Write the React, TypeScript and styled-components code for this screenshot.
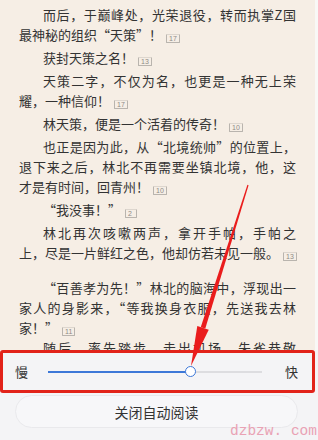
import React from "react";
import styled, { createGlobalStyle } from "styled-components";

const GlobalStyle = createGlobalStyle`
  html, body { margin: 0; padding: 0; }
  body { background: #f9f8f6; font-family: "Noto Sans CJK SC", "Noto Sans", sans-serif; }
`;

const Page = styled.div`
  position: relative;
  width: 318px;
  height: 440px;
  overflow: hidden;
  display: flex;
  flex-direction: column;
  background: #f9f8f6;
`;

const Reader = styled.div`
  height: 350px;
  box-sizing: border-box;
  margin-right: 3px;
  padding: 5px 19px 0 19px;
  background: #f6eee5;
  overflow: hidden;
  color: #333;
  font-size: 13px;
  line-height: 20px;
`;

const Para = styled.div<{ $gap?: number }>`
  margin-top: ${(p) => (p.$gap ?? 3)}px;
  &:first-child { margin-top: 0; }
`;

const Line = styled.div<{ $indent?: boolean; $full?: boolean }>`
  display: block;
  white-space: nowrap;
  padding-left: ${(p) => (p.$indent ? "24px" : "0")};
  text-align: ${(p) => (p.$full ? "justify" : "left")};
  text-align-last: ${(p) => (p.$full ? "justify" : "left")};
  ${(p) => (p.$full ? "white-space: normal;" : "")}
`;

const Badge = styled.span`
  display: inline-block;
  box-sizing: border-box;
  min-width: 12px;
  height: 9px;
  padding: 0 2px;
  margin-left: 4px;
  border: 1px solid #b9b4ae;
  border-top-color: #ddd6ce;
  border-radius: 1px;
  font-family: "Liberation Sans", sans-serif;
  font-size: 7px;
  line-height: 7px;
  color: #8f8a85;
  text-align: center;
  vertical-align: -1px;
`;

const Panel = styled.div`
  flex: 1;
  display: flex;
  flex-direction: column;
  background: #f4f4f6;
`;

const SpeedRow = styled.div`
  width: 315px;
  height: 43px;
  box-sizing: border-box;
  border: 3px solid #e2231a;
  border-radius: 3px;
  display: flex;
  align-items: center;
  padding: 0 14px 0 12px;
  gap: 0;
  color: #333;
  font-size: 13px;
`;

const SpeedLabel = styled.span`
  width: 13px;
  line-height: 16px;
`;

const Track = styled.div`
  position: relative;
  flex: 1;
  height: 2px;
  margin: 0 23px 0 20px;
  background: #dddde0;
`;

const Fill = styled.div`
  position: absolute;
  left: 0;
  top: 0;
  height: 100%;
  background: #3d78d8;
`;

const Thumb = styled.div`
  position: absolute;
  top: 50%;
  width: 11px;
  height: 11px;
  box-sizing: border-box;
  margin: -5.5px 0 0 -5.5px;
  border: 1.5px solid #3d78d8;
  border-radius: 50%;
  background: #fff;
`;

const Button = styled.div`
  height: 33px;
  margin: 2px 20px 0 15px;
  box-sizing: border-box;
  border: 1px solid #e9e9ec;
  border-radius: 17px;
  background: #f7f7f9;
  display: flex;
  align-items: center;
  justify-content: center;
  color: #333;
  font-size: 14px;
`;

const Watermark = styled.div`
  position: absolute;
  right: 1px;
  bottom: 1px;
  font-family: "Liberation Mono", "DejaVu Sans Mono", monospace;
  font-size: 14.5px;
  line-height: 16px;
  color: #e9a2b4;
  white-space: pre;
`;

const Overlay = styled.svg`
  position: absolute;
  left: 0;
  top: 0;
  pointer-events: none;
`;

type P = { lines: { t: string; full?: boolean }[]; badge?: string; gap?: number };

const paras: P[] = [
  { lines: [{ t: "而后，于巅峰处，光荣退役，转而执掌Z国", full: true }, { t: "最神秘的组织“天策”！" }], badge: "17" },
  { lines: [{ t: "获封天策之名！" }], badge: "13" },
  { lines: [{ t: "天策二字，不仅为名，也更是一种无上荣", full: true }, { t: "耀，一种信仰！" }], badge: "17" },
  { lines: [{ t: "林天策，便是一个活着的传奇！" }], badge: "10" },
  {
    lines: [
      { t: "也正是因为此，从“北境统帅”的位置上，", full: true },
      { t: "退下来之后，林北不再需要坐镇北境，他，这", full: true },
      { t: "才是有时间，回青州！" },
    ],
    badge: "10",
  },
  { lines: [{ t: "“我没事！”" }], badge: "2" },
  { lines: [{ t: "林北再次咳嗽两声，拿开手帕，手帕之", full: true }, { t: "上，尽是一片鲜红之色，他却仿若未见一般。" }], badge: "13" },
  {
    lines: [
      { t: "“百善孝为先！”林北的脑海中，浮现出一", full: true },
      { t: "家人的身影来，“等我换身衣服，先送我去林", full: true },
      { t: "家！”" },
    ],
    badge: "11",
    gap: 14.5,
  },
  { lines: [{ t: "随后，率先踏步，走出机场，朱雀恭敬", full: true }], gap: 0 },
];

function Arrow() {
  const S = [248, 185];
  const T = [191, 366];
  const dx = T[0] - S[0];
  const dy = T[1] - S[1];
  const len = Math.hypot(dx, dy);
  const d = [dx / len, dy / len];
  const n = [-d[1], d[0]];
  const headLen = 40;
  const B = [T[0] - d[0] * headLen, T[1] - d[1] * headLen];
  const pt = (c: number[], w: number) => `${c[0] + n[0] * w},${c[1] + n[1] * w}`;
  const shaft = [pt(S, 0.6), pt(B, 2.4), pt(B, -2.4), pt(S, -0.6)].join(" ");
  const head = [pt(B, 6), `${T[0]},${T[1]}`, pt(B, -6)].join(" ");
  return (
    <Overlay width={318} height={440} viewBox="0 0 318 440">
      <polygon points={shaft} fill="#ea1c1c" />
      <polygon points={head} fill="#ea1c1c" />
    </Overlay>
  );
}

export default function App() {
  const pct = 66.5;
  return (
    <>
      <GlobalStyle />
      <Page>
        <Reader>
          {paras.map((p, i) => (
            <Para key={i} $gap={p.gap}>
              {p.lines.map((l, j) => (
                <Line key={j} $indent={j === 0} $full={l.full}>
                  {l.t}
                  {j === p.lines.length - 1 && p.badge ? <Badge>{p.badge}</Badge> : null}
                </Line>
              ))}
            </Para>
          ))}
        </Reader>
        <Panel>
          <SpeedRow>
            <SpeedLabel>慢</SpeedLabel>
            <Track>
              <Fill style={{ width: `${pct}%` }} />
              <Thumb style={{ left: `${pct}%` }} />
            </Track>
            <SpeedLabel>快</SpeedLabel>
          </SpeedRow>
          <Button>关闭自动阅读</Button>
        </Panel>
        <Watermark>dzbzw. com</Watermark>
        <Arrow />
      </Page>
    </>
  );
}
